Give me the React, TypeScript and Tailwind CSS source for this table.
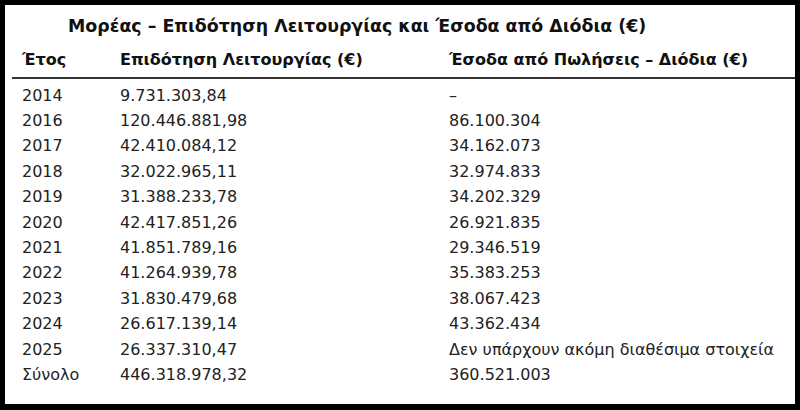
import React from 'react';

const rows = [
  ['2014', '9.731.303,84', '–'],
  ['2016', '120.446.881,98', '86.100.304'],
  ['2017', '42.410.084,12', '34.162.073'],
  ['2018', '32.022.965,11', '32.974.833'],
  ['2019', '31.388.233,78', '34.202.329'],
  ['2020', '42.417.851,26', '26.921.835'],
  ['2021', '41.851.789,16', '29.346.519'],
  ['2022', '41.264.939,78', '35.383.253'],
  ['2023', '31.830.479,68', '38.067.423'],
  ['2024', '26.617.139,14', '43.362.434'],
  ['2025', '26.337.310,47', 'Δεν υπάρχουν ακόμη διαθέσιμα στοιχεία'],
  ['Σύνολο', '446.318.978,32', '360.521.003'],
];

const App = () => {
  return (
    <div className="w-[800px] h-[410px] bg-black pt-[5px] pl-[5px] pr-[5px] pb-[6px] font-['DejaVu_Sans',sans-serif]">
      <div className="w-full h-full bg-white flex flex-col">
        <h1 className="pl-[63px] pt-[9px] h-[37px] text-[17.4px] leading-[24px] font-bold text-[#111]">
          Μορέας – Επιδότηση Λειτουργίας και Έσοδα από Διόδια (€)
        </h1>
        <div className="ml-[7px] flex h-[37px] items-center border-b-2 border-[#333] text-[16px] font-bold text-[#111]">
          <span className="w-[108px] pl-[10px]">Έτος</span>
          <span className="w-[329px]">Επιδότηση Λειτουργίας (€)</span>
          <span>Έσοδα από Πωλήσεις – Διόδια (€)</span>
        </div>
        <div className="ml-[7px] pt-[4px] text-[16px] text-[#222]">
          {rows.map(([year, grant, income]) => (
            <div key={year} className="flex h-[25.4px] items-center">
              <span className="w-[108px] pl-[10px]">{year}</span>
              <span className="w-[329px]">{grant}</span>
              <span>{income}</span>
            </div>
          ))}
        </div>
      </div>
    </div>
  );
};

export default App;
